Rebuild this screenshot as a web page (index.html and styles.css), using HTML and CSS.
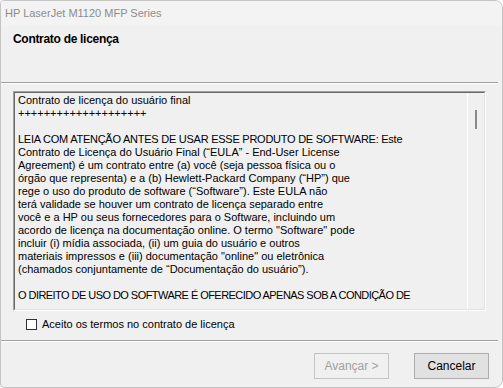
FILE: index.html
```html
<!DOCTYPE html>
<html lang="pt-BR">
<head>
  <meta charset="UTF-8"/>
  <title>HP LaserJet M1120 MFP Series</title>
  <link rel="stylesheet" href="styles.css">
</head>
<body>
  <div class="window">
    <div class="titlebar">HP LaserJet M1120 MFP Series</div>

    <div class="header">
      <h1>Contrato de licença</h1>
    </div>
    <div class="sep"></div>

    <div class="content">
      <div class="textbox">
        <div class="textbox-inner">
          <div class="eula">
            <div class="line">Contrato de licença do usuário final</div>
            <div class="line">++++++++++++++++++++</div>
            <div class="line"></div>
            <div class="line caps">LEIA COM ATENÇÃO ANTES DE USAR ESSE PRODUTO DE SOFTWARE: Este</div>
            <div class="line">Contrato de Licença do Usuário Final (“EULA” - End-User License</div>
            <div class="line">Agreement) é um contrato entre (a) você (seja pessoa física ou o</div>
            <div class="line">órgão que representa) e a (b) Hewlett-Packard Company (“HP”) que</div>
            <div class="line">rege o uso do produto de software (“Software”). Este EULA não</div>
            <div class="line">terá validade se houver um contrato de licença separado entre</div>
            <div class="line">você e a HP ou seus fornecedores para o Software, incluindo um</div>
            <div class="line">acordo de licença na documentação online. O termo "Software" pode</div>
            <div class="line">incluir (i) mídia associada, (ii) um guia do usuário e outros</div>
            <div class="line">materiais impressos e (iii) documentação "online" ou eletrônica</div>
            <div class="line">(chamados conjuntamente de “Documentação do usuário”).</div>
            <div class="line"></div>
            <div class="line all-caps">O DIREITO DE USO DO SOFTWARE É OFERECIDO APENAS SOB A CONDIÇÃO DE</div>
          </div>
          <div class="scrollbar">
            <div class="thumb"></div>
          </div>
        </div>
      </div>

      <label class="accept">
        <span class="checkbox"></span>
        <span>Aceito os termos no contrato de licença</span>
      </label>
    </div>
    <div class="sep"></div>

    <div class="footer">
      <button class="btn" disabled>Avançar &gt;</button>
      <button class="btn">Cancelar</button>
    </div>
  </div>
</body>
</html>
```

FILE: styles.css
```css
/* ===== Global ===== */
* { margin: 0; padding: 0; box-sizing: border-box; }
body {
  width: 503px;
  height: 388px;
  overflow: hidden;
  background: #ffffff;
  font-family: 'Liberation Sans', Arial, sans-serif;
}

/* ===== Window ===== */
.window {
  width: 503px;
  height: 388px;
  display: flex;
  flex-direction: column;
  background: #f0f0f0;
  border: 1px solid #c4c4c4;
  border-radius: 4px 8px 8px 4px;
  overflow: hidden;
}
.titlebar {
  height: 25px;
  padding: 6px 0 0 4px;
  font-size: 11px;
  color: #8c8c8c;
  background: #f3f3f3;
}

/* ===== Header ===== */
.header {
  height: 56px;
  padding: 6px 0 0 12px;
  background: #f0f0f0;
}
.header h1 {
  font-size: 12px;
  font-weight: 700;
  letter-spacing: -0.3px;
  color: #000;
}
.sep {
  width: 497px;
  height: 2px;
  border-top: 1px solid #a0a0a0;
  border-bottom: 1px solid #ffffff;
}

/* ===== Content ===== */
.content {
  padding: 7px 16px 0 12px;
  height: 256px;
}
.textbox {
  width: 473px;
  height: 220px;
  border: 1px solid;
  border-color: #a0a0a0 #ffffff #ffffff #a0a0a0;
}
.textbox-inner {
  height: 100%;
  display: flex;
  border: 1px solid;
  border-color: #696969 #e3e3e3 #e3e3e3 #696969;
}
.eula {
  flex: 1;
  overflow: hidden;
  padding: 1px 0 0 3px;
  font-family: 'Liberation Sans', Tahoma, sans-serif;
  font-size: 11px;
  line-height: 13px;
  color: #000;
}
.line {
  height: 13px;
  white-space: nowrap;
}
.line.caps { letter-spacing: -0.25px; }
.line.all-caps { letter-spacing: -0.55px; }
.scrollbar {
  width: 17px;
  border-left: 1px solid #ffffff;
  padding: 17px 0 0 7px;
}
.thumb {
  width: 2px;
  height: 19px;
  background: #8a8a8a;
}

.accept {
  display: flex;
  align-items: center;
  gap: 5px;
  margin: 7px 0 0 13px;
  font-size: 11px;
  color: #000;
}
.checkbox {
  width: 11px;
  height: 11px;
  border: 1px solid #333333;
  background: #ffffff;
}

/* ===== Footer ===== */
.footer {
  flex: 1;
  display: flex;
  justify-content: flex-end;
  gap: 25px;
  padding: 11px 13px 0 0;
}
.btn {
  width: 75px;
  height: 26px;
  font-family: 'Liberation Sans', Arial, sans-serif;
  font-size: 12px;
  color: #000;
  background: #e1e1e1;
  border: 1px solid #adadad;
}
.btn:disabled {
  color: #a0a0a0;
  background: #f0f0f0;
  border-color: #c4c4c4;
}
```
